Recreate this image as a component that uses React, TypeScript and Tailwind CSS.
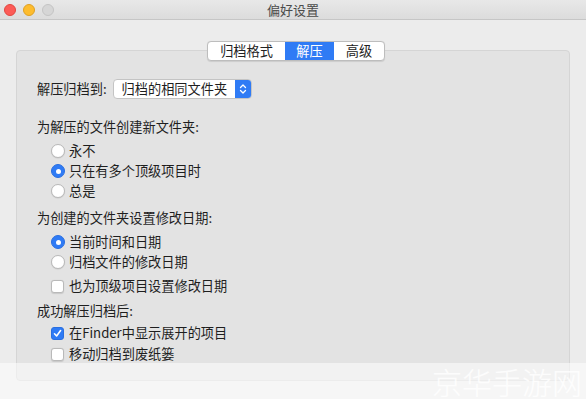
import React from 'react';

const font = { fontFamily: '"Noto Sans CJK SC", "Noto Sans", sans-serif' };

function Radio({ checked }: { checked?: boolean }) {
  return checked ? (
    <span className="w-[14px] h-[14px] rounded-full bg-[#2f7bf5] border border-[#2a6fe0] flex items-center justify-center shrink-0">
      <span className="w-[5px] h-[5px] rounded-full bg-white" />
    </span>
  ) : (
    <span className="w-[14px] h-[14px] rounded-full bg-white border border-[#b9b9b9] shadow-[0_0.5px_1px_rgba(0,0,0,0.12)] shrink-0" />
  );
}

function Checkbox({ checked }: { checked?: boolean }) {
  return checked ? (
    <span className="w-[13px] h-[13px] rounded-[3px] bg-[#2f7bf5] border border-[#2a6fe0] flex items-center justify-center shrink-0">
      <svg width="9" height="9" viewBox="0 0 9 9" fill="none">
        <path d="M1.5 4.8 L3.6 7 L7.6 1.6" stroke="white" strokeWidth="1.6" strokeLinecap="round" strokeLinejoin="round" />
      </svg>
    </span>
  ) : (
    <span className="w-[13px] h-[13px] rounded-[3px] bg-white border border-[#b9b9b9] shadow-[0_0.5px_1px_rgba(0,0,0,0.12)] shrink-0" />
  );
}

function Option({ children, type, checked, className = '' }: { children: React.ReactNode; type: 'radio' | 'check'; checked?: boolean; className?: string }) {
  return (
    <div className={`flex items-center h-[20px] ml-[14px] ${className}`}>
      {type === 'radio' ? <Radio checked={checked} /> : <Checkbox checked={checked} />}
      <span className={type === 'radio' ? 'ml-[4px]' : 'ml-[5px]'}>{children}</span>
    </div>
  );
}

export default function App() {
  const tabs = [
    { label: '归档格式', w: 'w-[77px]' },
    { label: '解压', w: 'w-[49px]', active: true },
    { label: '高级', w: 'w-[50px]' },
  ];

  return (
    <div className="relative w-[586px] h-[399px] overflow-hidden bg-[#ececec] text-[13.2px] text-[#1e1e1e] leading-[20px]" style={font}>
      {/* title bar */}
      <div className="h-[20px] grid grid-cols-[1fr_auto_1fr] items-center bg-gradient-to-b from-[#e8e8e8] to-[#dcdcdc] border-b border-[#c6c6c6]">
        <div className="flex items-center gap-[7px] pl-[4px]">
          <span className="w-[12px] h-[12px] rounded-full bg-[#fc5b57] border border-[#e2463f]" />
          <span className="w-[12px] h-[12px] rounded-full bg-[#fdbc2e] border border-[#dfa022]" />
          <span className="w-[12px] h-[12px] rounded-full bg-[#d6d6d6] border border-[#c4c4c4]" />
        </div>
        <div className="text-[#4b4b4b] text-[13px] leading-[19px]">偏好设置</div>
        <div />
      </div>

      <div className="px-[16px] pt-[21px]">
        {/* segmented tabs */}
        <div className="relative z-10 flex justify-center pl-[6px]">
          <div className="flex h-[20px] rounded-[4px] border border-[#bdbdbd] bg-white overflow-hidden shadow-[0_0.5px_1px_rgba(0,0,0,0.1)]">
            {tabs.map((t) => (
              <div
                key={t.label}
                className={`${t.w} flex items-center justify-center leading-[18px] ${t.active ? 'bg-[#2f7bf5] text-white' : 'text-[#222]'}`}
              >
                {t.label}
              </div>
            ))}
          </div>
        </div>

        {/* group box */}
        <div className="-mt-[11px] h-[331px] rounded-[4px] border border-[#d5d5d5] bg-[#e3e3e3] pl-[20px]">
          <div className="flex items-center mt-[28px] h-[20px]">
            <span>解压归档到:</span>
            <div className="ml-[6px] flex items-center h-[20px] w-[139px] rounded-[4px] border border-[#c4c4c4] bg-white overflow-hidden">
              <span className="flex-1 pl-[8px] leading-[18px]">归档的相同文件夹</span>
              <span className="w-[16px] h-full bg-[#2f7bf5] flex items-center justify-center">
                <svg width="8" height="12" viewBox="0 0 8 12" fill="none">
                  <path d="M1.5 4.5 L4 2 L6.5 4.5" stroke="white" strokeWidth="1.3" strokeLinecap="round" strokeLinejoin="round" />
                  <path d="M1.5 7.5 L4 10 L6.5 7.5" stroke="white" strokeWidth="1.3" strokeLinecap="round" strokeLinejoin="round" />
                </svg>
              </span>
            </div>
          </div>

          <div className="mt-[18px]">为解压的文件创建新文件夹:</div>
          <Option type="radio" className="mt-[4px]">永不</Option>
          <Option type="radio" checked>只在有多个顶级项目时</Option>
          <Option type="radio">总是</Option>

          <div className="mt-[7px]">为创建的文件夹设置修改日期:</div>
          <Option type="radio" checked className="mt-[4px]">当前时间和日期</Option>
          <Option type="radio">归档文件的修改日期</Option>
          <Option type="check" className="mt-[4px]">也为顶级项目设置修改日期</Option>

          <div className="mt-[5px]">成功解压归档后:</div>
          <Option type="check" checked className="mt-[2px]">在Finder中显示展开的项目</Option>
          <Option type="check" className="mt-[1px]">移动归档到废纸篓</Option>
        </div>
      </div>

      {/* watermark band */}
      <div className="absolute left-0 right-0 top-[363px] bottom-0 bg-white/55 flex justify-end items-center pr-[4px]">
        <span className="text-[30px] leading-[32px] font-light text-white/80">京华手游网</span>
      </div>
    </div>
  );
}
